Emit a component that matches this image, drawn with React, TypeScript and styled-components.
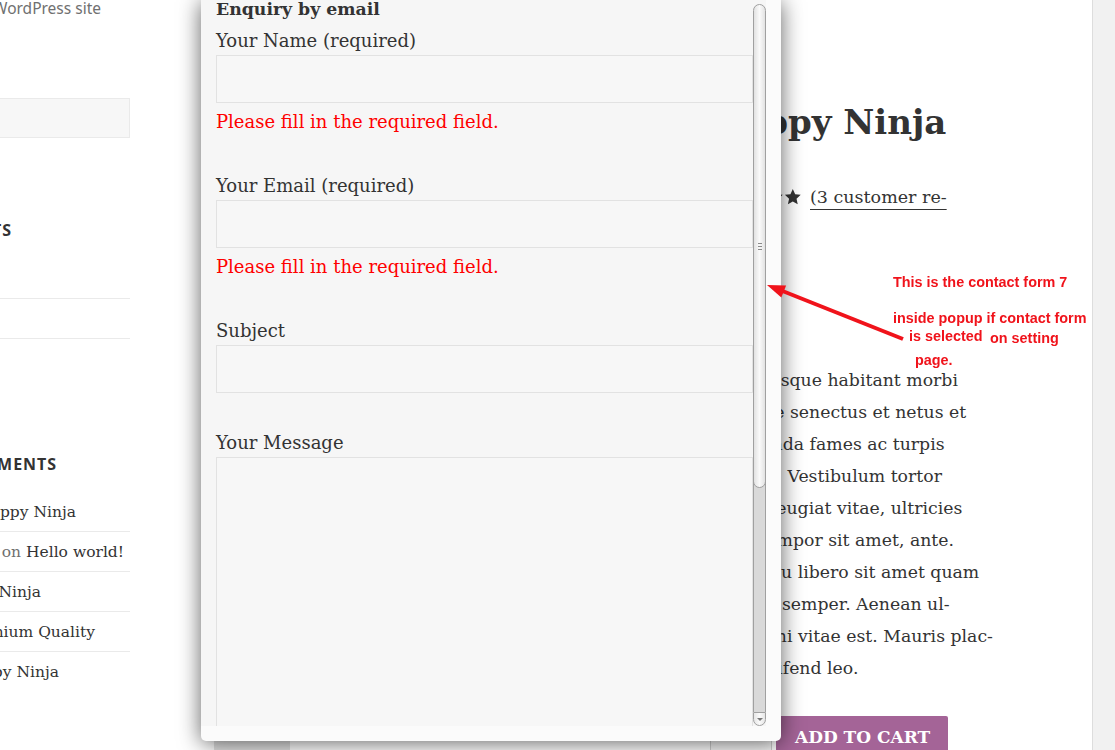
import React from 'react'
import styled, { createGlobalStyle } from 'styled-components'

const serif = `"DejaVu Serif", "Liberation Serif", serif`
const sans = `"Noto Sans", "Open Sans", sans-serif`

const GlobalStyle = createGlobalStyle`
  html, body {
    margin: 0;
    padding: 0;
  }
  body {
    background: #f1f1f1;
    font-family: ${serif};
    color: #333;
    overflow: hidden;
  }
`

// ---------- page behind the popup ----------

const Site = styled.div`
  display: flex;
  width: 1092px;
  height: 750px;
  background: #fff;
  border-right: 1px solid #ddd;
  overflow: hidden;
`

const Sidebar = styled.aside`
  width: 130px;
  flex: none;
  overflow: hidden;
`

// text whose start is scrolled off to the left: it ends at $end px
const Clip = styled.div<{ $end: number }>`
  display: flex;
  justify-content: flex-end;
  width: ${p => p.$end}px;
  white-space: nowrap;
`

const Tagline = styled.div`
  margin-top: -4px;
  font-family: ${sans};
  font-size: 15.5px;
  line-height: 24px;
  color: #707070;
`

const SearchField = styled.div`
  box-sizing: border-box;
  height: 40px;
  margin-top: 78px;
  background: #f7f7f7;
  border: 1px solid #eaeaea;
  border-left: none;
`

const WidgetTitle = styled.h2<{ $gap: number }>`
  margin: ${p => p.$gap}px 0 0;
  font-family: ${sans};
  font-size: 16px;
  font-weight: 700;
  line-height: 24px;
  letter-spacing: 0.06em;
  text-transform: uppercase;
  color: #333;
`

const WidgetList = styled.ul<{ $gap: number }>`
  list-style: none;
  margin: ${p => p.$gap}px 0 0;
  padding: 0;
`

const WidgetItem = styled.li`
  padding: 8px 0 7px;
  font-size: 15.5px;
  line-height: 24px;
  color: #333;

  & + & {
    border-top: 1px solid #eaeaea;
  }
`

const Muted = styled.span`
  color: #707070;
`

const Content = styled.main`
  flex: 1;
  display: flex;
  padding-left: 84px;
`

const Gallery = styled.div`
  width: 496px;
  flex: none;
  display: flex;
  flex-direction: column;
  justify-content: flex-end;
`

const Thumb = styled.div`
  width: 76px;
  height: 60px;
  background: #e2e2e2;
`

const Summary = styled.div`
  width: 300px;
  padding-top: 100px;
`

const ProductTitle = styled.h1`
  margin: 0;
  font-size: 34px;
  font-weight: 700;
  line-height: 44px;
  white-space: nowrap;
  color: #333;
`

const Rating = styled.div`
  margin-top: 37px;
  font-size: 17.5px;
  line-height: 32px;
  white-space: nowrap;
`

const Stars = styled.span`
  display: inline-flex;
  justify-content: flex-end;
  gap: 1px;
  width: 92px;
  margin-right: 8px;
  vertical-align: -3px;
`

const ReviewLink = styled.a`
  color: #333;
  text-decoration: underline;
  text-decoration-thickness: 1px;
  text-underline-offset: 6px;
`

const Description = styled.div`
  margin-top: 119px;
  font-size: 17.3px;
  line-height: 32px;
  color: #333;
`

const Line = styled.div`
  white-space: nowrap;
`

const CartRow = styled.div`
  display: flex;
  gap: 4px;
  margin-top: 32px;
`

const Quantity = styled.div`
  box-sizing: border-box;
  width: 62px;
  height: 48px;
  border: 1px solid #cfcfcf;
  background: #f7f7f7;
`

const CartButton = styled.button`
  display: flex;
  align-items: flex-start;
  align-self: flex-start;
  height: 48px;
  padding: 0 18px 0 19px;
  border: none;
  border-radius: 2px 2px 0 0;
  background: #a46497;
  color: #fff;
  font-family: ${serif};
  font-size: 17px;
  font-weight: 700;
  text-transform: uppercase;
  line-height: 43px;
`

// ---------- popup ----------

const Popup = styled.div`
  position: fixed;
  left: 201px;
  top: 0;
  box-sizing: border-box;
  width: 580px;
  height: 741px;
  padding: 0 15px 15px 0;
  display: flex;
  background: #fbfbfb;
  border-radius: 0 0 5px 5px;
  box-shadow: 0 2px 22px rgba(0, 0, 0, 0.62);
`

const ScrollArea = styled.div`
  flex: 1;
  display: flex;
  background: #f6f6f6;
  overflow: hidden;
`

const FormBody = styled.div`
  flex: 1;
  padding-left: 15px;
  margin-top: -6px;
  font-size: 18px;
  line-height: 30px;
  color: #333;
`

const FormTitle = styled.h3`
  margin: 0 0 1px;
  font-size: 17.3px;
  font-weight: 700;
  line-height: 30px;
`

const Field = styled.div`
  margin-bottom: 34px;
`

const Label = styled.label`
  display: block;
  padding-top: 2px;
  line-height: 28px;
`

const TextInput = styled.input`
  display: block;
  box-sizing: border-box;
  width: 100%;
  height: 48px;
  margin: 0;
  background: #f7f7f7;
  border: 1px solid #e2e2e2;
  outline: none;
`

const MessageInput = styled.textarea`
  display: block;
  box-sizing: border-box;
  width: 100%;
  height: 330px;
  margin: 0;
  background: #f7f7f7;
  border: 1px solid #e2e2e2;
  resize: none;
  outline: none;
`

const ErrorTip = styled.span`
  display: block;
  margin-top: 5px;
  line-height: 28px;
  color: #f00;
`

const Scrollbar = styled.div`
  width: 13px;
  flex: none;
  display: flex;
  flex-direction: column;
`

const ScrollThumb = styled.div`
  position: relative;
  z-index: 1;
  box-sizing: border-box;
  height: 484px;
  margin-top: 4px;
  display: flex;
  flex-direction: column;
  align-items: center;
  justify-content: center;
  gap: 2px;
  border: 1px solid #a0a0a0;
  border-radius: 7px;
  background: linear-gradient(to right, #e2e2e2, #fafafa 50%, #e2e2e2);
`

const Grip = styled.i`
  display: block;
  width: 4px;
  height: 1px;
  background: #8a8a8a;
`

const ScrollTrack = styled.div`
  flex: 1;
  margin-top: -8px;
  border-left: 1px solid #a0a0a0;
  border-right: 1px solid #a0a0a0;
  background: #d9d9d9;
`

const ScrollArrow = styled.div`
  box-sizing: border-box;
  height: 14px;
  display: flex;
  align-items: center;
  justify-content: center;
  border: 1px solid #a0a0a0;
  border-radius: 0 0 7px 7px;
  background: linear-gradient(to right, #e6e6e6, #fafafa 50%, #e6e6e6);

  &::after {
    content: '';
    border-left: 3px solid transparent;
    border-right: 3px solid transparent;
    border-top: 3px solid #777;
  }
`

// ---------- red annotation drawn on the screenshot ----------

const Note = styled.div<{ $x: number; $y: number }>`
  position: fixed;
  left: ${p => p.$x}px;
  top: ${p => p.$y}px;
  font-family: "Liberation Sans", Arial, sans-serif;
  font-size: 14.4px;
  font-weight: 700;
  line-height: 16px;
  color: #f0131b;
  white-space: nowrap;
`

const ArrowLayer = styled.svg`
  position: fixed;
  left: 0;
  top: 0;
  pointer-events: none;
`

const Star = () => (
  <svg width="18" height="18" viewBox="0 0 24 24">
    <path d="M12 1.2l3.2 7.1 7.6.8-5.7 5.2 1.6 7.6L12 18l-6.7 3.9 1.6-7.6-5.7-5.2 7.6-.8z" fill="#333" />
  </svg>
)

const description = [
  'Pellentesque habitant morbi',
  'tristique senectus et netus et',
  'malesuada fames ac turpis',
  'egestas. Vestibulum tortor',
  'quam, feugiat vitae, ultricies',
  'eget, tempor sit amet, ante.',
  'Donec eu libero sit amet quam',
  'egestas semper. Aenean ul-',
  'tricies mi vitae est. Mauris plac-',
  'erat eleifend leo.',
]

const recentComments = [
  { author: 'admin', post: 'Happy Ninja', end: 76 },
  { author: 'Mr WordPress', post: 'Hello world!', end: 124 },
  { author: 'admin', post: 'Woo Ninja', end: 41 },
  { author: 'admin', post: 'Premium Quality', end: 95 },
  { author: 'admin', post: 'Happy Ninja', end: 59 },
]

const recentPosts = ['Hello world!', 'Happy Ninja', 'Woo Ninja']

export default function App() {
  return (
    <>
      <GlobalStyle />
      <Site>
        <Sidebar>
          <Tagline>
            <Clip $end={101}>Just another WordPress site</Clip>
          </Tagline>
          <SearchField />

          <WidgetTitle $gap={80}>
            <Clip $end={12}>Recent Posts</Clip>
          </WidgetTitle>
          <WidgetList $gap={17}>
            {recentPosts.map(p => (
              <WidgetItem key={p}>
                <Clip $end={0}>{p}</Clip>
              </WidgetItem>
            ))}
          </WidgetList>

          <WidgetTitle $gap={74}>
            <Clip $end={57}>Recent Comments</Clip>
          </WidgetTitle>
          <WidgetList $gap={16}>
            {recentComments.map((c, i) => (
              <WidgetItem key={i}>
                <Clip $end={c.end}>
                  <span>
                    <Muted>{c.author} on </Muted>
                    {c.post}
                  </span>
                </Clip>
              </WidgetItem>
            ))}
          </WidgetList>
        </Sidebar>

        <Content>
          <Gallery>
            <Thumb />
          </Gallery>
          <Summary>
            <ProductTitle>Happy Ninja</ProductTitle>
            <Rating>
              <Stars>
                <Star />
                <Star />
                <Star />
                <Star />
                <Star />
              </Stars>
              <ReviewLink>
                (3 customer re-
                <br />
                views)
              </ReviewLink>
            </Rating>
            <Description>
              {description.map(l => (
                <Line key={l}>{l}</Line>
              ))}
            </Description>
            <CartRow>
              <Quantity />
              <CartButton>Add to cart</CartButton>
            </CartRow>
          </Summary>
        </Content>
      </Site>

      <Popup>
        <ScrollArea>
          <FormBody>
            <FormTitle>Enquiry by email</FormTitle>
            <Field>
              <Label>Your Name (required)</Label>
              <TextInput type="text" />
              <ErrorTip>Please fill in the required field.</ErrorTip>
            </Field>
            <Field>
              <Label>Your Email (required)</Label>
              <TextInput type="email" />
              <ErrorTip>Please fill in the required field.</ErrorTip>
            </Field>
            <Field>
              <Label>Subject</Label>
              <TextInput type="text" />
            </Field>
            <Field>
              <Label>Your Message</Label>
              <MessageInput />
            </Field>
          </FormBody>
          <Scrollbar>
            <ScrollThumb>
              <Grip />
              <Grip />
              <Grip />
            </ScrollThumb>
            <ScrollTrack />
            <ScrollArrow />
          </Scrollbar>
        </ScrollArea>
      </Popup>

      <Note $x={893} $y={274}>This is the contact form 7</Note>
      <Note $x={893} $y={310}>inside popup if contact form</Note>
      <Note $x={909} $y={328}>is selected</Note>
      <Note $x={990} $y={330}>on setting</Note>
      <Note $x={915} $y={352}>page.</Note>
      <ArrowLayer width="1115" height="750" viewBox="0 0 1115 750">
        <line x1="903" y1="339" x2="780" y2="290" stroke="#f0131b" strokeWidth="4" />
        <polygon points="767,285 781.3,297.6 786.1,285.6" fill="#f0131b" />
      </ArrowLayer>
    </>
  )
}
